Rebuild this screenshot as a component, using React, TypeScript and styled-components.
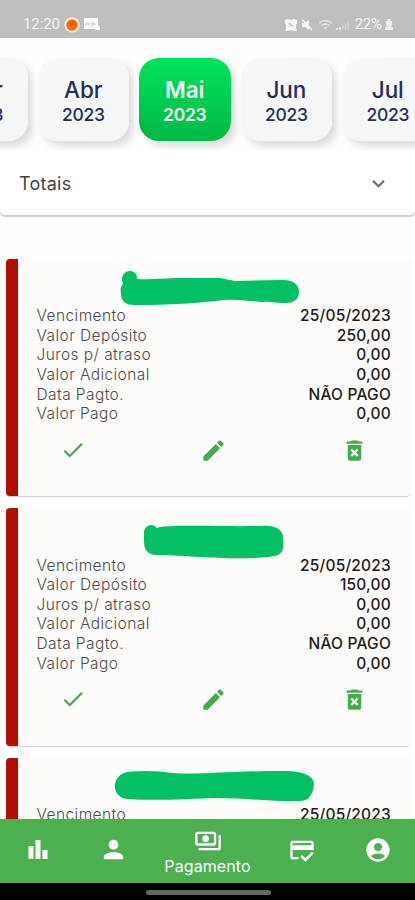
import React from "react";
import styled, { createGlobalStyle } from "styled-components";
import {
  MdAccountCircle, MdCheck, MdCreditScore, MdDeleteForever, MdEdit,
  MdExpandMore, MdOutlinePayments, MdPerson, MdWifi,
} from "react-icons/md";

const GlobalStyle = createGlobalStyle`
  * { box-sizing: border-box; }
  body { margin: 0; background: #fff; font-family: Inter, sans-serif; overflow: hidden; }
  svg { display: block; flex: none; }
`;

const Screen = styled.div`
  width: 415px;
  height: 900px;
  display: flex;
  flex-direction: column;
  overflow: hidden;
  background: #fefefe;
`;

const StatusBar = styled.header`
  height: 38px;
  flex: none;
  padding: 10px 22px 0 23px;
  display: flex;
  justify-content: space-between;
  background: #bebebe;
  color: #f4f4f4;
  font-family: Roboto, sans-serif;
  font-size: 15px;
  line-height: 29px;
`;

const StatusGroup = styled.div<{ $gap: number }>`
  height: 29px;
  display: flex;
  align-items: center;
  gap: ${(p) => p.$gap}px;
`;

const Clock = styled.span`
  letter-spacing: -0.1px;
`;

const Battery = styled.span`
  margin-left: 2px;
  letter-spacing: -0.4px;
`;

const MonthStrip = styled.nav`
  height: 112px;
  flex: none;
  display: flex;
  gap: 10px;
  padding-top: 20px;
  margin-left: -64px;
  width: 580px;
`;

const MonthTile = styled.button<{ $active?: boolean }>`
  width: 91.5px;
  height: 83px;
  flex: none;
  border: 0;
  border-radius: 20px;
  padding: 5px 0 0;
  display: flex;
  flex-direction: column;
  align-items: center;
  font-family: Inter, sans-serif;
  color: ${(p) => (p.$active ? "#f4fff6" : "#1f2e5e")};
  background: ${(p) => (p.$active ? "linear-gradient(#00e35b, #00b845)" : "linear-gradient(135deg, #f8f8f8, #f4f5f6)")};
  box-shadow: 5px 5px 8px #dadada, -3px -3px 6px #fff;
`;

const MonthName = styled.span<{ $active?: boolean }>`
  margin-top: 13px;
  font-size: 22.5px;
  line-height: 27px;
  font-weight: ${(p) => (p.$active ? 600 : 450)};
  letter-spacing: -0.1px;
`;

const MonthYear = styled.span<{ $active?: boolean }>`
  font-size: 17.5px;
  line-height: 23px;
  font-weight: ${(p) => (p.$active ? 600 : 450)};
  letter-spacing: -0.3px;
`;

const Totals = styled.section`
  height: 65px;
  flex: none;
  padding: 1px 24px 0 19px;
  display: flex;
  align-items: center;
  justify-content: space-between;
  border-radius: 5px;
  background: #fff;
  box-shadow: 0 2px 1px #cfcfcf;
  color: #444;
  font-size: 18px;
  letter-spacing: 0.25px;
`;

const CardList = styled.main`
  flex: 1;
  min-height: 0;
  overflow: hidden;
  display: flex;
  flex-direction: column;
  gap: 12px;
  padding: 44px 5px 0 6px;
`;

const Card = styled.article`
  height: 237.3px;
  flex: none;
  border-left: 12px solid #b10e05;
  border-radius: 4px;
  padding: 13px 19px 0 18.5px;
  background: #fdfcfa;
  box-shadow: 0 1px 1px #cfd0d0;
`;

const Redaction = styled.svg`
  width: 355px;
  height: 34px;
  margin-left: -0.5px;
  overflow: visible;
`;

const Row = styled.div`
  height: 19.6px;
  display: flex;
  justify-content: space-between;
  align-items: center;
  font-size: 15.5px;
`;

const Label = styled.span`
  color: #4b4b4b;
  font-weight: 300;
  letter-spacing: 0.42px;
`;

const Value = styled.span`
  color: #1b1b1b;
  font-weight: 500;
  letter-spacing: 0.2px;
`;

const Actions = styled.div`
  display: flex;
  justify-content: space-between;
  align-items: center;
  padding: 13px 23px 0 23px;
  color: #43ab4b;
`;

const BottomNav = styled.nav`
  height: 64px;
  flex: none;
  display: grid;
  grid-template-columns: 76px 75px 112px 77px 75px;
  align-items: center;
  justify-items: center;
  background: #4caf50;
  color: #fff;
`;

const NavItem = styled.div`
  display: flex;
  flex-direction: column;
  align-items: center;
  margin-top: -3px;
  font-size: 16px;
  line-height: 20px;
  letter-spacing: 0.1px;
  white-space: nowrap;
`;

const NavLabel = styled.span`
  margin-top: 1px;
`;

const ActiveNavItem = styled(NavItem)`
  margin: 0 -1px 0 0;
`;

const GestureBar = styled.footer`
  height: 17px;
  flex: none;
  display: flex;
  justify-content: center;
  align-items: center;
  background: #000;
`;

const GestureHandle = styled.div`
  width: 125px;
  height: 5px;
  margin: 1px 0 0 2px;
  border-radius: 3px;
  background: #656565;
`;

const months = ["Mar", "Abr", "Mai", "Jun", "Jul"];

const payments = [
  {
    amount: "250,00",
    scribble:
      "M87 12C84 5 88 -1 94 -1C99 -1 101 2 101 7C115 8 125 6 145 6L184 6C192 7 195 9 202 9L244 8C259 7 263 14 263 20C263 28 257 31 249 31C237 31 234 29 226 30C212 29 200 27 189 28C165 31 130 33 101 33C89 34 85 28 85 22C84 17 85 14 87 12Z",
  },
  {
    amount: "150,00",
    scribble:
      "M108 10C110 3 117 2 121 7C132 3 178 6 226 5C239 4 248 8 247 19C248 31 246 35 232 36C201 39 171 36 126 34C112 35 108 30 108 20Z",
  },
  {
    amount: "150,00",
    scribble:
      "M91 1C108-1 124 0 137 2C163 4 193 0 249 0C267 0 278 5 278 13C277 25 272 31 261 30C235 31 213 27 179 27C150 28 119 30 93 28C75 28 74 5 91 1Z",
  },
];

const PaymentCard = ({ amount, scribble }: { amount: string; scribble: string }) => {
  const rows = [
    ["Vencimento", "25/05/2023"],
    ["Valor Depósito", amount],
    ["Juros p/ atraso", "0,00"],
    ["Valor Adicional", "0,00"],
    ["Data Pagto.", "NÃO PAGO"],
    ["Valor Pago", "0,00"],
  ];
  return (
    <Card>
      <Redaction viewBox="0 0 355 34">
        <path d={scribble} fill="#04c064" />
      </Redaction>
      {rows.map(([label, value]) => (
        <Row key={label}>
          <Label>{label}</Label>
          <Value>{value}</Value>
        </Row>
      ))}
      <Actions>
        <MdCheck size={26} />
        <MdEdit size={27} />
        <MdDeleteForever size={27} />
      </Actions>
    </Card>
  );
};

export default function App() {
  return (
    <>
      <GlobalStyle />
      <Screen>
        <StatusBar>
          <StatusGroup $gap={4}>
            <Clock>12:20</Clock>
            <svg width="16" height="16" viewBox="0 0 16 16">
              <circle cx="8" cy="8" r="7.7" fill="#f6eadb" />
              <circle cx="8" cy="8" r="5.7" fill="#f9690a" />
              <path d="M8 8L10 4M8 8L5 5" stroke="#dc4a13" strokeWidth="1.2" />
            </svg>
            <svg width="16" height="13" viewBox="0 0 16 13">
              <path d="M0 0H14V7L16 9V12H12L10 11H0Z" fill="#fafafa" />
              <path d="M2 5H5V7H2ZM7 5H10V7H7ZM10 6H12" fill="none" stroke="#cdcdcd" />
            </svg>
          </StatusGroup>
          <StatusGroup $gap={3.5}>
            <svg width="12" height="12" viewBox="0 0 12 12">
              <path d="M0 1L3 0L6 1L9 0L12 1V4L11 6V9L12 12H9L6 11L3 12H0L1 9V6L0 4Z" fill="#f5f5f5" />
              <path d="M4 4L6 6.5H8.5" fill="none" stroke="#bebebe" strokeWidth="1.3" />
            </svg>
            <svg width="14" height="14" viewBox="0 0 14 14">
              <path d="M2 5H5L9 2V12L5 9H2Z" fill="#f3f3f3" />
              <path d="M2 1.5L12 12" stroke="#f3f3f3" strokeWidth="1.6" />
            </svg>
            <MdWifi size={15} opacity={0.65} />
            <svg width="13" height="12" viewBox="0 0 13 12">
              <path d="M1 11V9M4 11V8" stroke="#ededed" strokeWidth="1.7" />
              <path d="M7 11V6M9.5 11V4M12 11V2" stroke="#d5d5d5" strokeWidth="1.3" />
            </svg>
            <Battery>22%</Battery>
            <svg width="8" height="13" viewBox="0 0 8 13">
              <path d="M2.5 1H5.5V3H7V7L6 9H8V12H0V9H2L1 7V3H2.5Z" fill="#eee" />
            </svg>
          </StatusGroup>
        </StatusBar>
        <MonthStrip>
          {months.map((month) => (
            <MonthTile key={month} $active={month === "Mai"}>
              <MonthName $active={month === "Mai"}>{month}</MonthName>
              <MonthYear $active={month === "Mai"}>2023</MonthYear>
            </MonthTile>
          ))}
        </MonthStrip>
        <Totals>
          <span>Totais</span>
          <MdExpandMore size={25} color="#6a6a6a" />
        </Totals>
        <CardList>
          {payments.map((payment, index) => (
            <PaymentCard key={index} {...payment} />
          ))}
        </CardList>
        <BottomNav>
          <NavItem>
            <svg width="20" height="20" viewBox="0 0 20 20">
              <path d="M.5 6H5.5V19H.5ZM7.5 0H12.5V19H7.5ZM14.5 10H19.5V19H14.5Z" fill="#fff" />
            </svg>
          </NavItem>
          <NavItem><MdPerson size={29} /></NavItem>
          <ActiveNavItem>
            <MdOutlinePayments size={28} />
            <NavLabel>Pagamento</NavLabel>
          </ActiveNavItem>
          <NavItem><MdCreditScore size={28} /></NavItem>
          <NavItem><MdAccountCircle size={28} /></NavItem>
        </BottomNav>
        <GestureBar><GestureHandle /></GestureBar>
      </Screen>
    </>
  );
}
